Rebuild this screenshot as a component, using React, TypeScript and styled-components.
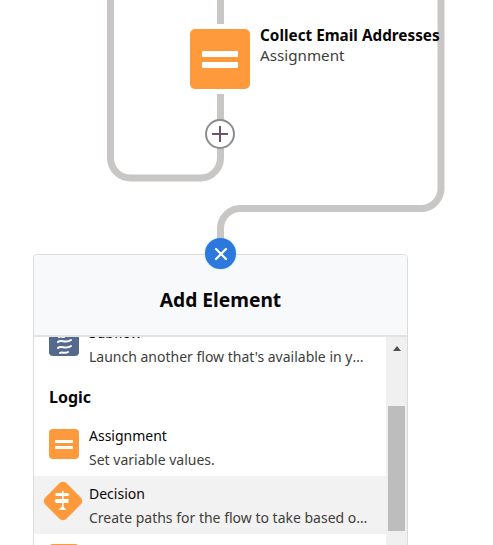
import React from 'react';
import styled, { createGlobalStyle } from 'styled-components';

const GlobalStyle = createGlobalStyle`
  html, body {
    margin: 0;
    padding: 0;
    background: #fff;
    font-family: "Noto Sans", "Open Sans", sans-serif;
  }
`;

const Canvas = styled.div`
  position: relative;
  width: 493px;
  height: 545px;
  overflow: hidden;
  background: #fff;
`;

const Connectors = styled.svg`
  position: absolute;
  left: 0;
  top: 0;
`;

const Node = styled.div`
  position: absolute;
  left: 190px;
  top: 29px;
  display: flex;
  gap: 10px;
`;

const IconTile = styled.div<{ $size: number; $radius: number; $bg: string }>`
  flex: none;
  width: ${(p) => p.$size}px;
  height: ${(p) => p.$size}px;
  border-radius: ${(p) => p.$radius}px;
  background: ${(p) => p.$bg};
  display: flex;
  align-items: center;
  justify-content: center;
`;

const NodeText = styled.div`
  display: flex;
  flex-direction: column;
  white-space: nowrap;
`;

const NodeTitle = styled.div`
  font-size: 15.3px;
  font-weight: 700;
  line-height: 16px;
  margin-top: -2px;
  color: #080707;
`;

const NodeSub = styled.div`
  font-size: 15.2px;
  line-height: 20px;
  margin-top: 2px;
  color: #3e3e3c;
`;

const AddButton = styled.div`
  position: absolute;
  left: 205px;
  top: 119px;
  width: 30px;
  height: 30px;
  box-sizing: border-box;
  border: 2px solid #8c8c8c;
  border-radius: 50%;
  background: #fff;
  display: flex;
  align-items: center;
  justify-content: center;
`;

const Popover = styled.div`
  position: absolute;
  left: 33px;
  top: 254px;
  width: 375px;
  height: 300px;
  box-sizing: border-box;
  border: 1px solid #dddbda;
  border-radius: 4px;
  background: #fff;
  display: flex;
  flex-direction: column;
`;

const CloseButton = styled.div`
  position: absolute;
  left: 205px;
  top: 238px;
  width: 31px;
  height: 31px;
  border-radius: 50%;
  background: #2b79dc;
  box-shadow: 0 0 2px #9fd0f5;
  display: flex;
  align-items: center;
  justify-content: center;
  z-index: 1;
`;

const PopoverHeader = styled.div`
  flex: none;
  height: 72px;
  padding-top: 8px;
  background: #f8f9fb;
  border-bottom: 2px solid #e4e3e2;
  border-radius: 4px 4px 0 0;
  display: flex;
  align-items: center;
  justify-content: center;
  font-size: 19.2px;
  font-weight: 700;
  color: #080707;
`;

const PopoverBody = styled.div`
  flex: 1;
  display: flex;
  min-height: 0;
`;

const ListViewport = styled.div`
  flex: 1;
  min-width: 0;
  overflow: hidden;
`;

const List = styled.div`
  margin-top: -22px;
  display: flex;
  flex-direction: column;
`;

const Row = styled.div<{ $active?: boolean }>`
  height: 58px;
  padding: 0 15px;
  display: flex;
  gap: 10px;
  align-items: flex-start;
  box-sizing: border-box;
  background: ${(p) => (p.$active ? '#f3f2f2' : 'transparent')};
`;

const RowIcon = styled.div<{ $top?: number }>`
  flex: none;
  margin-top: ${(p) => p.$top ?? 11}px;
`;

const RowText = styled.div`
  min-width: 0;
  flex: 1;
  padding-top: 8px;
  display: flex;
  flex-direction: column;
  gap: 5px;
`;

const RowTitle = styled.div`
  font-size: 14px;
  line-height: 19px;
  color: #080707;
`;

const RowDesc = styled.div`
  font-size: 14px;
  line-height: 19px;
  color: #3e3e3c;
  white-space: nowrap;
  overflow: hidden;
  text-overflow: ellipsis;
`;

const SectionTitle = styled.div`
  font-size: 16px;
  font-weight: 700;
  line-height: 22px;
  color: #080707;
  padding: 13px 15px 10px;
`;

const Diamond = styled.div`
  width: 30px;
  height: 30px;
  margin: -1px 1px 0 -1px;
  position: relative;
  display: flex;
  align-items: center;
  justify-content: center;
  &::before {
    content: '';
    position: absolute;
    inset: 0;
    background: #ff9a3c;
    border-radius: 5px;
    transform: rotate(45deg);
  }
  & > svg {
    position: relative;
  }
`;

const Scrollbar = styled.div`
  flex: none;
  width: 21px;
  background: #f0f0f0;
  display: flex;
  flex-direction: column;
  align-items: center;
  padding-top: 9px;
  box-sizing: border-box;
`;

const ArrowUp = styled.div`
  width: 0;
  height: 0;
  border-left: 4px solid transparent;
  border-right: 4px solid transparent;
  border-bottom: 5px solid #505050;
`;

const Thumb = styled.div`
  width: 17px;
  height: 125px;
  margin-top: 55px;
  background: #bdbdbd;
`;

const EqualsIcon = ({ width, bar, gap }: { width: number; bar: number; gap: number }) => (
  <svg width={width} height={bar * 2 + gap} viewBox={`0 0 ${width} ${bar * 2 + gap}`}>
    <rect width={width} height={bar} rx="1" fill="#fff" />
    <rect y={bar + gap} width={width} height={bar} rx="1" fill="#fff" />
  </svg>
);

const App = () => (
  <Canvas>
    <GlobalStyle />
    <Connectors width="493" height="545" fill="none" stroke="#c9c7c5" strokeWidth="7">
      <path d="M110.5 0V158a20 20 0 0 0 20 20H200.5a20 20 0 0 0 20-20V94" />
      <path d="M220.5 0V24" />
      <path d="M441 0V188a20 20 0 0 1-20 20.5H240.5a20 20 0 0 0-20 20V250" />
    </Connectors>

    <Node>
      <IconTile $size={60} $radius={5} $bg="#ff9a3c">
        <EqualsIcon width={36} bar={6} gap={5} />
      </IconTile>
      <NodeText>
        <NodeTitle>Collect Email Addresses</NodeTitle>
        <NodeSub>Assignment</NodeSub>
      </NodeText>
    </Node>

    <AddButton>
      <svg width="16" height="16" viewBox="0 0 16 16" stroke="#6b4f72" strokeWidth="2">
        <path d="M8 0V16M0 8H16" />
      </svg>
    </AddButton>

    <CloseButton>
      <svg width="14" height="14" viewBox="0 0 14 14" stroke="#fff" strokeWidth="2.2" strokeLinecap="round">
        <path d="M2 2L12 12M12 2L2 12" />
      </svg>
    </CloseButton>

    <Popover>
      <PopoverHeader>Add Element</PopoverHeader>
      <PopoverBody>
        <ListViewport>
          <List>
            <Row>
              <RowIcon>
                <IconTile $size={30} $radius={4} $bg="#54698d">
                  <svg width="30" height="30" viewBox="0 0 30 30" fill="none" stroke="#fff" strokeWidth="2" strokeLinecap="round">
                    <path d="M10 11c2-1 3 0 5 0M9 16c3-3 8 2 13-2M9 22c3-3 8 2 13-2M11 27c2-1.5 5 1 8-1" />
                  </svg>
                </IconTile>
              </RowIcon>
              <RowText>
                <RowTitle>Subflow</RowTitle>
                <RowDesc>Launch another flow that's available in your org.</RowDesc>
              </RowText>
            </Row>
            <SectionTitle>Logic</SectionTitle>
            <Row>
              <RowIcon>
                <IconTile $size={30} $radius={4} $bg="#ff9a3c">
                  <EqualsIcon width={18} bar={3} gap={3} />
                </IconTile>
              </RowIcon>
              <RowText>
                <RowTitle>Assignment</RowTitle>
                <RowDesc>Set variable values.</RowDesc>
              </RowText>
            </Row>
            <Row $active>
              <RowIcon>
                <Diamond>
                  <svg width="20" height="22" viewBox="0 0 20 22" fill="#fff">
                    <rect x="9" y="1" width="1.6" height="17" />
                    <path d="M2.5 3H15L16.5 4.5L15 6H2.5Z" />
                    <path d="M15.5 9H3L1.5 11L3 13H15.5Z" />
                    <path d="M5.5 20L9.5 16L13.5 20Z" />
                  </svg>
                </Diamond>
              </RowIcon>
              <RowText>
                <RowTitle>Decision</RowTitle>
                <RowDesc>Create paths for the flow to take based on conditions.</RowDesc>
              </RowText>
            </Row>
            <Row>
              <RowIcon $top={10}>
                <IconTile $size={30} $radius={4} $bg="#ff9a3c" />
              </RowIcon>
            </Row>
          </List>
        </ListViewport>
        <Scrollbar>
          <ArrowUp />
          <Thumb />
        </Scrollbar>
      </PopoverBody>
    </Popover>
  </Canvas>
);

export default App;
